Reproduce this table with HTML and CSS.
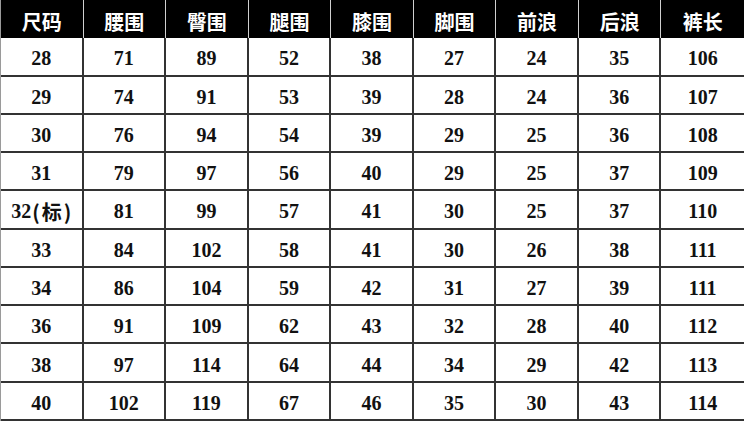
FILE: index.html
```html
<!DOCTYPE html>
<html lang="zh">
<head>
<meta charset="utf-8">
<title>尺码表</title>
<link rel="stylesheet" href="styles.css">
</head>
<body>
<div class="table">
  <div class="row head">
    <div class="cell">尺码</div><div class="cell">腰围</div><div class="cell">臀围</div><div class="cell">腿围</div><div class="cell">膝围</div><div class="cell">脚围</div><div class="cell">前浪</div><div class="cell">后浪</div><div class="cell">裤长</div>
  </div>
  <div class="row"><div class="cell">28</div><div class="cell">71</div><div class="cell">89</div><div class="cell">52</div><div class="cell">38</div><div class="cell">27</div><div class="cell">24</div><div class="cell">35</div><div class="cell">106</div></div>
  <div class="row"><div class="cell">29</div><div class="cell">74</div><div class="cell">91</div><div class="cell">53</div><div class="cell">39</div><div class="cell">28</div><div class="cell">24</div><div class="cell">36</div><div class="cell">107</div></div>
  <div class="row"><div class="cell">30</div><div class="cell">76</div><div class="cell">94</div><div class="cell">54</div><div class="cell">39</div><div class="cell">29</div><div class="cell">25</div><div class="cell">36</div><div class="cell">108</div></div>
  <div class="row"><div class="cell">31</div><div class="cell">79</div><div class="cell">97</div><div class="cell">56</div><div class="cell">40</div><div class="cell">29</div><div class="cell">25</div><div class="cell">37</div><div class="cell">109</div></div>
  <div class="row"><div class="cell">32<span class="cjk">(<span class="mark">标</span>)</span></div><div class="cell">81</div><div class="cell">99</div><div class="cell">57</div><div class="cell">41</div><div class="cell">30</div><div class="cell">25</div><div class="cell">37</div><div class="cell">110</div></div>
  <div class="row"><div class="cell">33</div><div class="cell">84</div><div class="cell">102</div><div class="cell">58</div><div class="cell">41</div><div class="cell">30</div><div class="cell">26</div><div class="cell">38</div><div class="cell">111</div></div>
  <div class="row"><div class="cell">34</div><div class="cell">86</div><div class="cell">104</div><div class="cell">59</div><div class="cell">42</div><div class="cell">31</div><div class="cell">27</div><div class="cell">39</div><div class="cell">111</div></div>
  <div class="row"><div class="cell">36</div><div class="cell">91</div><div class="cell">109</div><div class="cell">62</div><div class="cell">43</div><div class="cell">32</div><div class="cell">28</div><div class="cell">40</div><div class="cell">112</div></div>
  <div class="row"><div class="cell">38</div><div class="cell">97</div><div class="cell">114</div><div class="cell">64</div><div class="cell">44</div><div class="cell">34</div><div class="cell">29</div><div class="cell">42</div><div class="cell">113</div></div>
  <div class="row"><div class="cell">40</div><div class="cell">102</div><div class="cell">119</div><div class="cell">67</div><div class="cell">46</div><div class="cell">35</div><div class="cell">30</div><div class="cell">43</div><div class="cell">114</div></div>
</div>
</body>
</html>
```
FILE: styles.css
```css
html, body {
  margin: 0;
  padding: 0;
  background: #ffffff;
}
.table {
  width: 744px;
  height: 421px;
  display: grid;
  grid-template-rows: repeat(11, 1fr);
  border-left: 1px solid #9a9a9a;
  box-sizing: border-box;
}
.row {
  display: grid;
  grid-template-columns: repeat(9, 1fr);
  border-bottom: 2px solid #333333;
}
.cell {
  display: flex;
  align-items: center;
  justify-content: center;
  padding-top: 5px;
  font-family: "Liberation Serif", "Noto Sans CJK SC", serif;
  font-weight: bold;
  font-size: 20px;
  color: #111111;
  border-right: 2px solid #333333;
}
.cell:last-child {
  border-right: none;
}
.cjk {
  font-family: "Noto Sans CJK SC", sans-serif;
  font-size: 20px;
  margin-left: 1px;
}
.mark {
  margin: 0 2px;
}
.head {
  background: #000000;
  border-bottom: none;
}
.head .cell {
  font-family: "Noto Sans CJK SC", sans-serif;
  color: #ffffff;
  font-size: 20px;
  border-right: 1px solid #d0d0d0;
  padding-top: 4px;
}
.head .cell:last-child {
  border-right: none;
}
```
